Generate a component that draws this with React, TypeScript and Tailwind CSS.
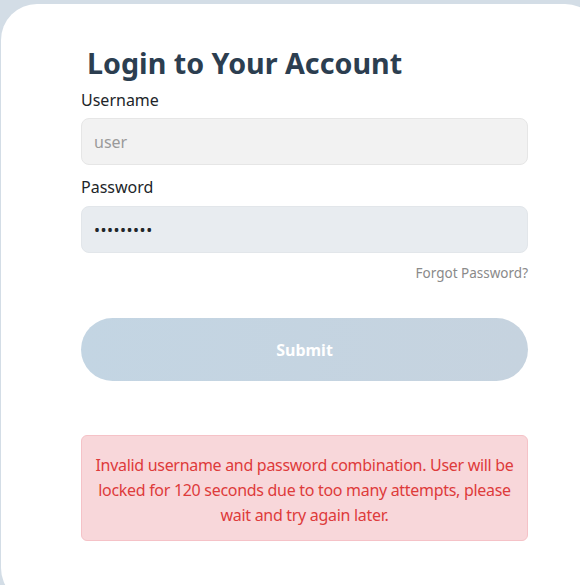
import { useState } from "react";

export default function App() {
  const [username, setUsername] = useState("");
  const [password, setPassword] = useState("secret123");

  return (
    <div className="h-[585px] w-[580px] overflow-hidden bg-[#d3dde6] font-['Noto_Sans',sans-serif]">
      <div className="ml-px mt-1 h-[600px] w-[600px] rounded-[36px] bg-white pl-20 pt-[37px]">
        <div className="w-[447px]">
          <h1 className="pl-[6px] text-[28.7px] font-bold leading-[44px] text-[#2c3e50]">
            Login to Your Account
          </h1>
          <label className="mt-[4px] block text-[16px] leading-[22px] text-[#212529]">Username</label>
          <input
            value={username}
            onChange={(e) => setUsername(e.target.value)}
            placeholder="user"
            className="mt-[7px] block h-[47px] w-full rounded-[8px] border border-[#e6e6e6] bg-[#f2f2f2] px-3 text-[16px] text-[#212529] outline-none placeholder:text-[#9a9a9a]"
          />
          <label className="mt-[11px] block text-[16px] leading-[22px] text-[#212529]">Password</label>
          <input
            type="password"
            value={password}
            onChange={(e) => setPassword(e.target.value)}
            className="mt-[8px] block h-[47px] w-full rounded-[8px] border border-[#e2e6ea] bg-[#e8ecf0] px-3 text-[16px] tracking-[0.5px] text-[#212529] outline-none"
          />
          <div className="mt-[10px] text-right text-[13.5px] leading-[20px] text-[#8a8a8a]">
            Forgot Password?
          </div>
          <button className="mt-[35px] h-[63px] w-full rounded-full bg-gradient-to-r from-[#c3d5e3] to-[#c6d3df] text-[16px] font-bold text-white">
            Submit
          </button>
          <div className="mt-[54px] rounded-[6px] border border-[#f5c2c7] bg-[#f8d7da] px-[10px] pb-[12px] pt-[17px] text-center text-[16px] leading-[25px] tracking-[-0.3px] text-[#de3b3b]">
            Invalid username and password combination. User will be locked for 120 seconds due
            to too many attempts, please wait and try again later.
          </div>
        </div>
      </div>
    </div>
  );
}
